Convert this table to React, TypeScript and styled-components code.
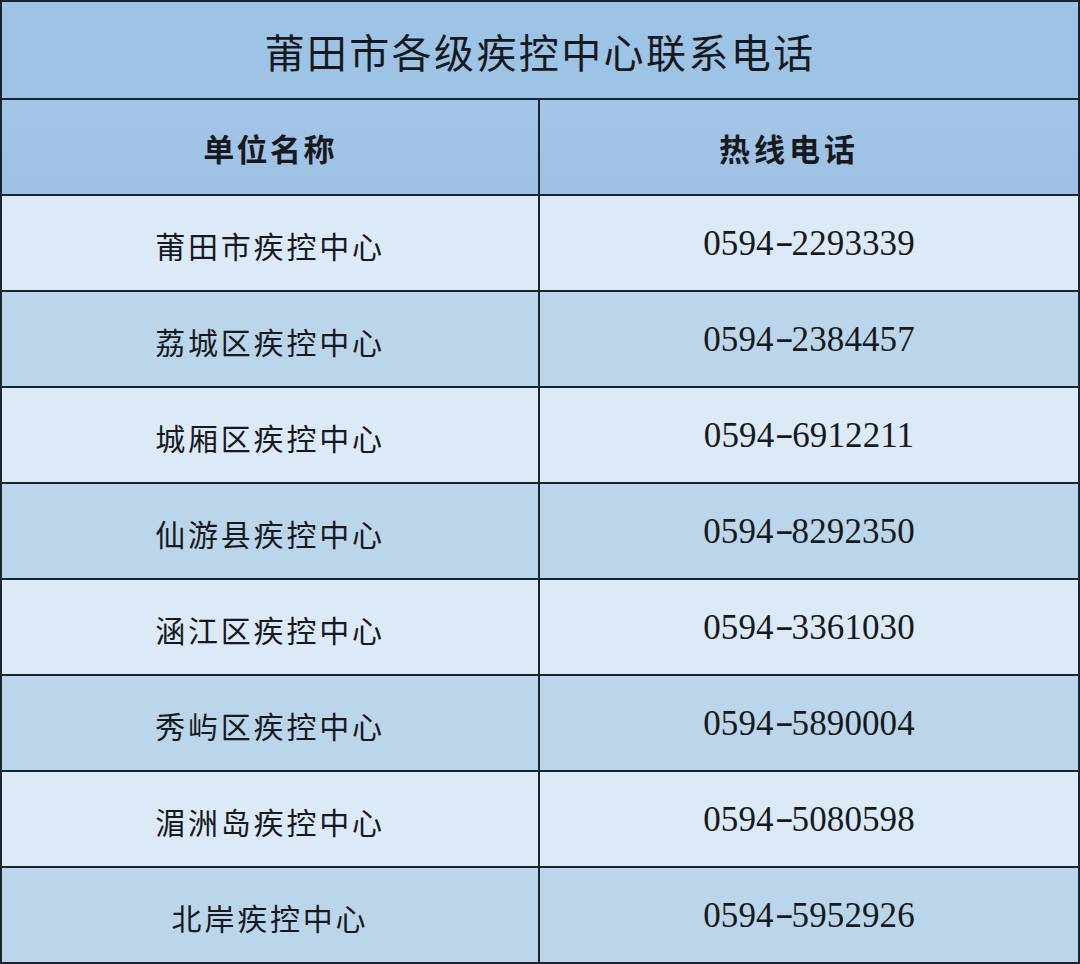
import styled, { createGlobalStyle } from 'styled-components'

const GlobalStyle = createGlobalStyle`
  html, body {
    margin: 0;
    padding: 0;
    background: #ffffff;
  }
  body {
    font-family: 'Noto Sans CJK SC', 'Noto Sans', sans-serif;
    color: #161a20;
  }
`;

const rows = [
  { name: '莆田市疾控中心', phone: '0594-2293339' },
  { name: '荔城区疾控中心', phone: '0594-2384457' },
  { name: '城厢区疾控中心', phone: '0594-6912211' },
  { name: '仙游县疾控中心', phone: '0594-8292350' },
  { name: '涵江区疾控中心', phone: '0594-3361030' },
  { name: '秀屿区疾控中心', phone: '0594-5890004' },
  { name: '湄洲岛疾控中心', phone: '0594-5080598' },
  { name: '北岸疾控中心', phone: '0594-5952926' },
];

function renderPhone(phone: string) {
  // Area code, a long dash, then the number
  const [area, number] = phone.split('-');
  return (
    <>
      {area}
      <Dash>-</Dash>
      {number}
    </>
  );
}

export default function App() {
  return (
    <>
      <GlobalStyle />
      <Sheet>
        <Title>莆田市各级疾控中心联系电话</Title>
        <HeadCell>单位名称</HeadCell>
        <HeadCell $wide>热线电话</HeadCell>
        {rows.map((row, i) => (
          <Row key={row.name} $shade={i % 2 === 1}>
            <NameCell>{row.name}</NameCell>
            <PhoneCell>{renderPhone(row.phone)}</PhoneCell>
          </Row>
        ))}
      </Sheet>
    </>
  );
}

/* Styled Components */
const Sheet = styled.div`
  width: 1080px;
  height: 964px;
  box-sizing: border-box;
  display: grid;
  grid-template-columns: 536px 1fr;
  grid-template-rows: 96px 94px repeat(8, 1fr);
  gap: 2px;
  border: 2px solid #1a2330;
  background: #1a2330;
`;

const Cell = styled.div`
  display: flex;
  align-items: center;
  justify-content: center;
`;

const Title = styled(Cell)`
  grid-column: 1 / span 2;
  background: #9dc3e5;
  font-size: 40px;
  letter-spacing: 2.4px;
  padding-top: 2px;
`;

const HeadCell = styled(Cell)<{ $wide?: boolean }>`
  background: linear-gradient(180deg, #a3c6e8 0%, #9ec0e4 100%);
  font-size: 31px;
  font-weight: 700;
  letter-spacing: ${(p) => (p.$wide ? '4px' : '2.4px')};
  padding-right: ${(p) => (p.$wide ? '40px' : '0')};
`;

const Row = styled.div<{ $shade: boolean }>`
  display: contents;

  & > div {
    background: ${(p) => (p.$shade ? '#bbd6eb' : '#dce9f6')};
  }
`;

const NameCell = styled(Cell)`
  font-size: 30px;
  letter-spacing: 2.8px;
  padding-top: 4px;
`;

const PhoneCell = styled(Cell)`
  font-family: 'Liberation Serif', 'Times New Roman', serif;
  font-size: 35px;
  letter-spacing: 0.1px;
  padding-top: 2px;
`;

const Dash = styled.span`
  display: inline-block;
  width: 10px;
  margin: 0 4px;
  text-align: center;
  letter-spacing: 0;
  transform: scaleX(1.6) translateY(-2px);
`;
